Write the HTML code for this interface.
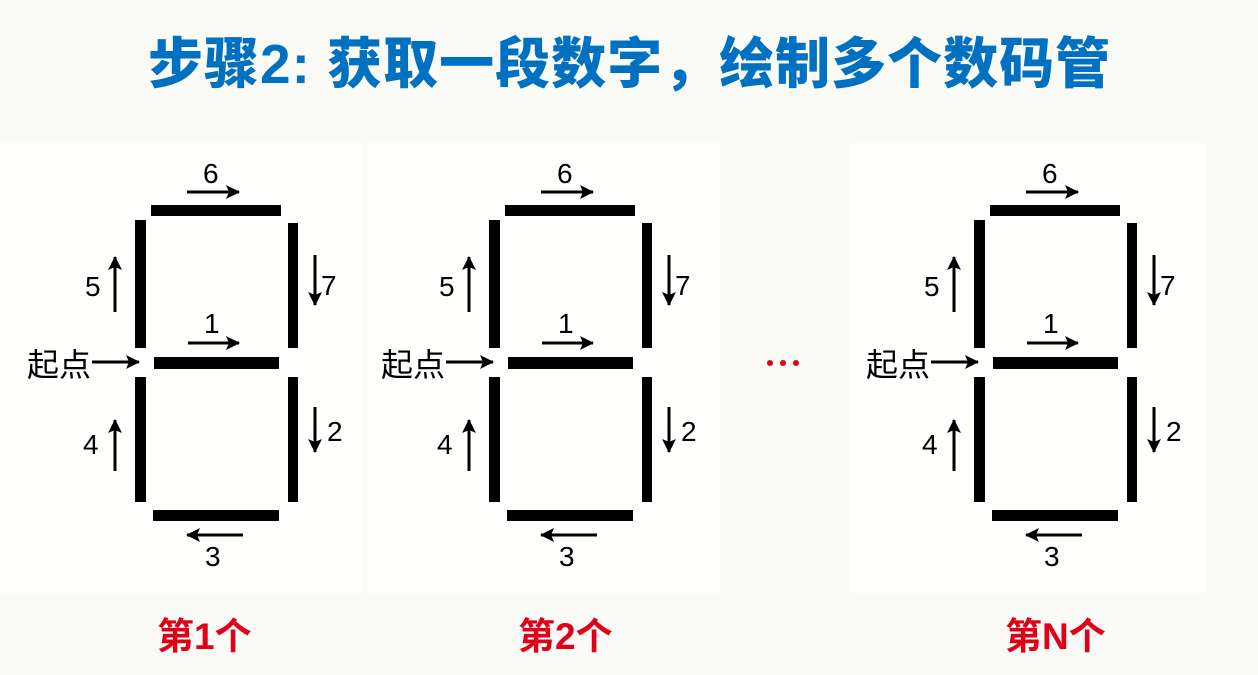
<!DOCTYPE html>
<html><head><meta charset="utf-8"><style>
html,body{margin:0;padding:0;background:#fafaf7;}
body{width:1258px;height:675px;overflow:hidden;position:relative;font-family:"Liberation Sans","Noto Sans CJK SC",sans-serif;}
.title{position:absolute;left:148px;top:31px;font-size:55px;letter-spacing:1px;font-weight:900;color:#0070c0;white-space:nowrap;line-height:66px;font-family:"Liberation Sans","Noto Sans CJK SC",sans-serif;}
.lab{position:absolute;top:613px;font-size:37px;font-weight:bold;color:#e00018;white-space:nowrap;line-height:48px;font-family:"Liberation Sans","Noto Sans CJK SC",sans-serif;}
</style></head><body>
<div style="position:absolute;left:0;top:143px;width:362px;height:450px;background:#fefefd"></div>
<div style="position:absolute;left:368px;top:143px;width:352px;height:450px;background:#fefefd"></div>
<div style="position:absolute;left:850px;top:143px;width:355px;height:450px;background:#fefefd"></div>
<div class="title">步骤2: 获取一段数字，绘制多个数码管</div>
<svg width="1258" height="675" style="position:absolute;left:0;top:0" xmlns="http://www.w3.org/2000/svg">
<defs>
<marker id="ah" markerWidth="14" markerHeight="14" refX="13" refY="7" orient="auto" markerUnits="userSpaceOnUse">
<path d="M0,0 L14,7 L0,14 L3,7 Z" fill="#000"/></marker>
<g id="dig">
<rect x="151" y="205" width="130" height="11" fill="#000"/>
<rect x="135" y="220" width="11" height="128" fill="#000"/>
<rect x="288" y="223" width="10" height="125" fill="#000"/>
<rect x="154" y="357" width="125" height="12" fill="#000"/>
<rect x="135" y="377" width="11" height="125" fill="#000"/>
<rect x="288" y="377" width="10" height="125" fill="#000"/>
<rect x="153" y="510" width="126" height="11" fill="#000"/>
<g stroke="#000" stroke-width="3" fill="none" marker-end="url(#ah)">
<line x1="187" y1="192" x2="239" y2="192"/>
<line x1="115" y1="312" x2="115" y2="257"/>
<line x1="315" y1="255" x2="315" y2="305"/>
<line x1="188" y1="343" x2="239" y2="343"/>
<line x1="92" y1="362" x2="139" y2="362"/>
<line x1="115" y1="471" x2="115" y2="420"/>
<line x1="315" y1="407" x2="315" y2="452"/>
<line x1="243" y1="535" x2="187" y2="535"/>
</g>
<g font-family="Liberation Sans, sans-serif" font-size="28" fill="#000">
<text x="203" y="183">6</text>
<text x="85" y="296">5</text>
<text x="321" y="295">7</text>
<text x="204" y="333">1</text>
<text x="83" y="454">4</text>
<text x="327" y="441">2</text>
<text x="205" y="566">3</text>
</g>
<text x="27" y="376" font-family="Noto Sans CJK SC, sans-serif" font-size="32" fill="#000">起点</text>
</g>
</defs>
<use href="#dig"/>
<use href="#dig" x="354"/>
<use href="#dig" x="839"/>
<g fill="#e00018"><circle cx="770" cy="363" r="3"/><circle cx="783" cy="363" r="3"/><circle cx="796" cy="363" r="3"/></g>
</svg>
<div class="lab" style="left:157px">第1个</div>
<div class="lab" style="left:518px">第2个</div>
<div class="lab" style="left:1005px">第N个</div>
</body></html>
